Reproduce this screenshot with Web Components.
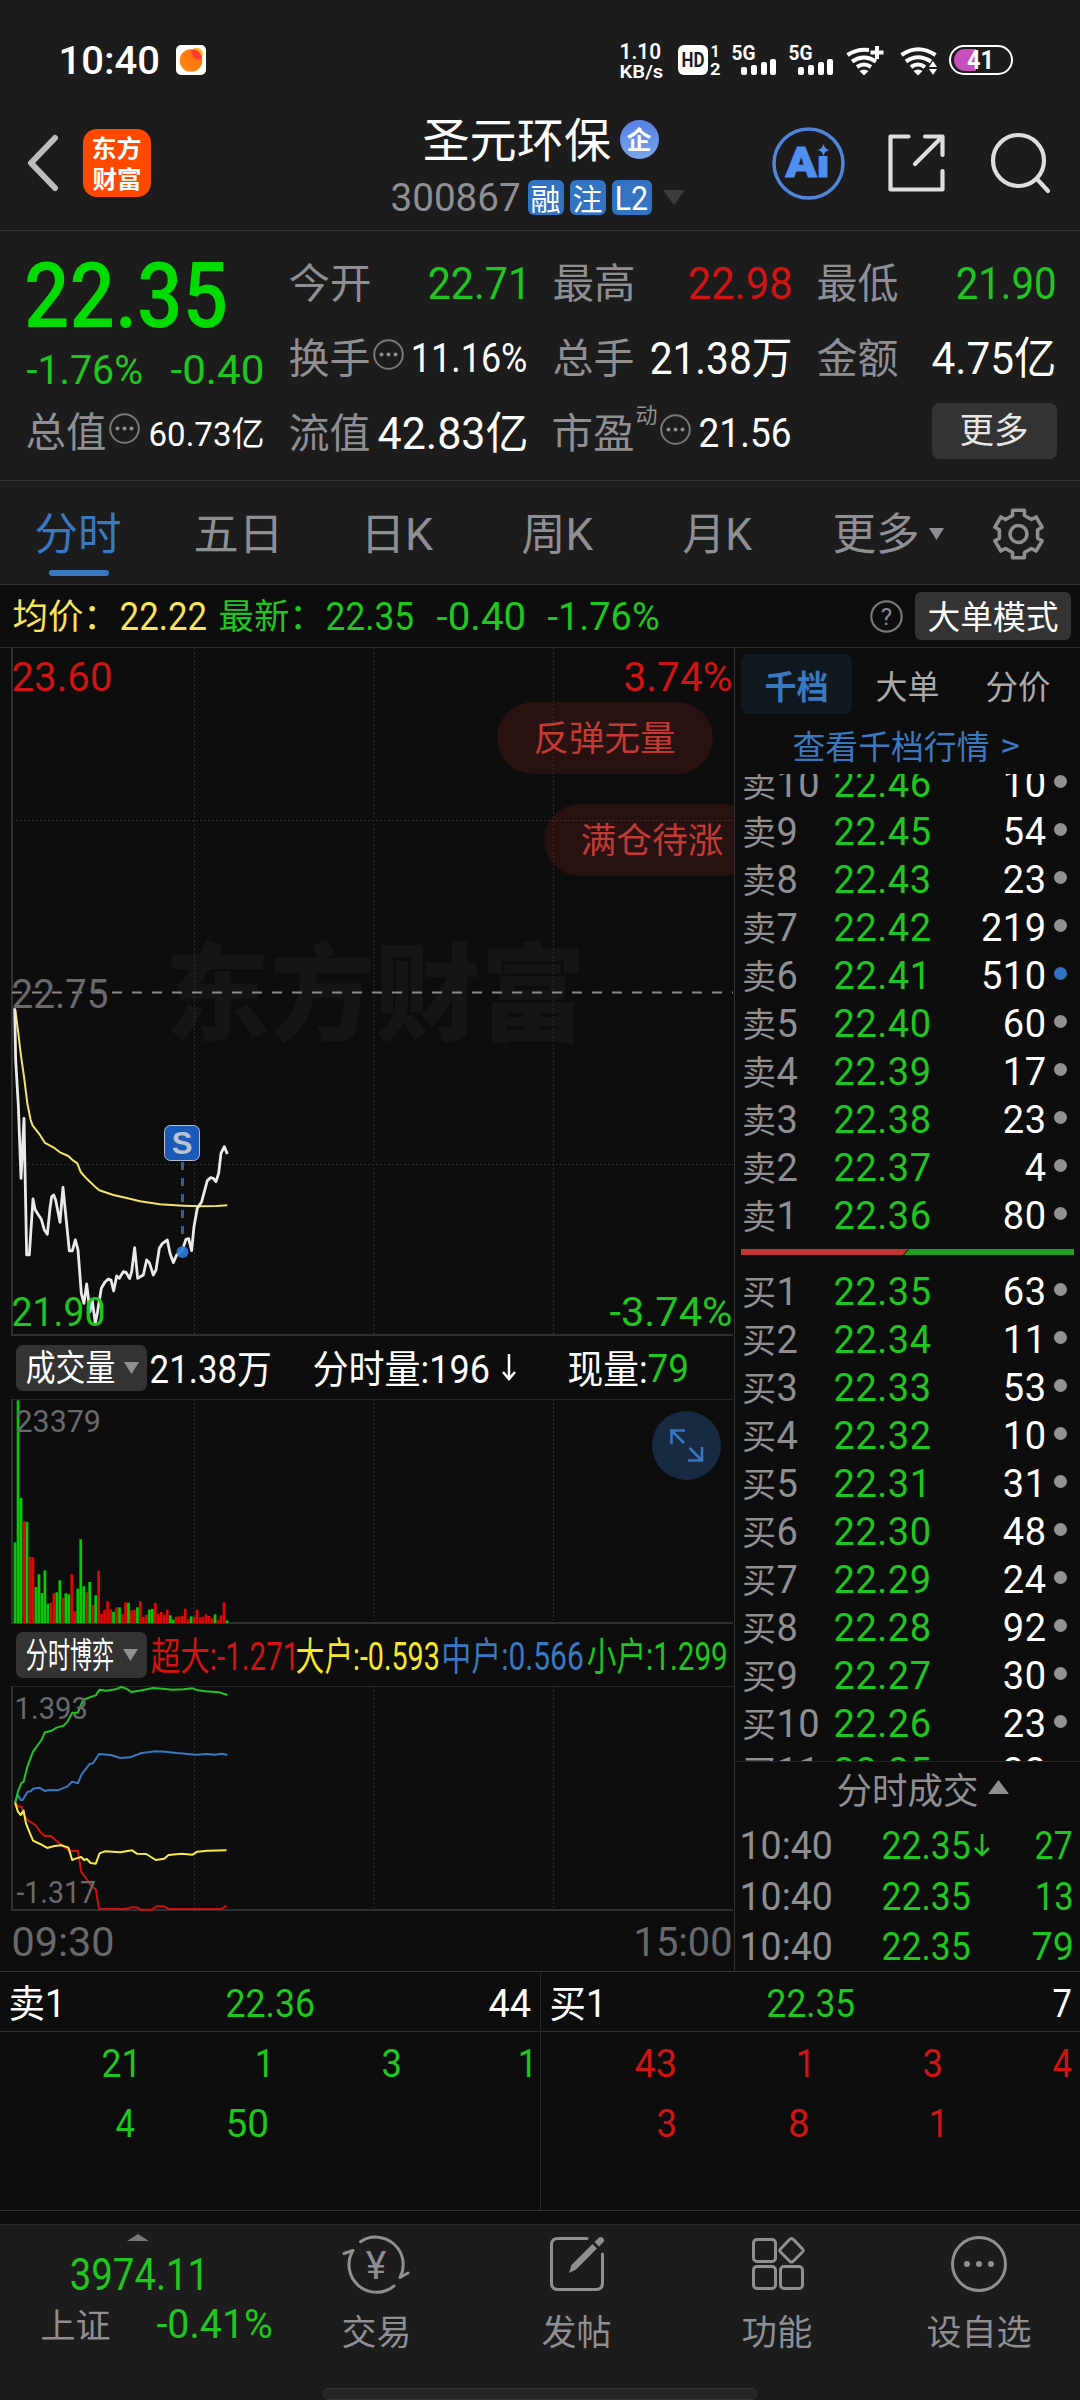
<!DOCTYPE html>
<html lang="zh-CN">
<head>
<meta charset="utf-8">
<title>圣元环保 300867</title>
<style>
    body {
        margin: 0;
        width: 1080px;
        height: 2400px;
        overflow: hidden;
        background: #1c1c1c;
        color: #fff;
        font-family: Roboto, "Noto Sans CJK SC", sans-serif;
        --up: #d01313;
        --down: #1fc61f;
        --grey: #8e8e93;
        --blue: #3a78c0;
        --line: #333;
        --dark: #0d0d0d;
    }
    main {
        display: flex;
        height: 1323px;
        border-top: 1px solid #2c2c2c;
        background: var(--dark);
    }
</style>
</head>
<body>
<status-bar></status-bar>
<stock-header></stock-header>
<quote-panel></quote-panel>
<period-tabs></period-tabs>
<price-strip></price-strip>
<main>
    <chart-column></chart-column>
    <order-book></order-book>
</main>
<deal-queue></deal-queue>
<bottom-nav></bottom-nav>

<script>
// Text squeezed or stretched to a given width, box is one cap-height tall
class FitText extends HTMLElement {
    connectedCallback() {
        if (this.shadowRoot) return;
        const size = Number(this.getAttribute('s')) || 38;
        const width = Number(this.getAttribute('w')) || 0;
        this.attachShadow({ mode: 'open' });
        this.shadowRoot.innerHTML = `
        <style>
            :host {
                display: block;
                flex: none;
                font-size: ${size}px;
                height: .711em;
                line-height: .711em;
                white-space: nowrap;
            }
            span {
                display: inline-block;
                transform-origin: 0 0;
            }
        </style>
        <span><slot></slot></span>`;
        if (!width) return;
        this.style.width = width + 'px';
        const cs = getComputedStyle(this);
        const ctx = FitText.canvas.getContext('2d');
        ctx.font = `${cs.fontWeight} ${size}px ${cs.fontFamily}`;
        const m = ctx.measureText(this.textContent);
        const k = width / (m.actualBoundingBoxRight + m.actualBoundingBoxLeft);
        // han glyphs sit a little high against the latin cap box
        const dy = /[\u4e00-\u9fff]/.test(this.textContent) ? 2 : 1;
        this.shadowRoot.querySelector('span').style.transform =
            `translate(${m.actualBoundingBoxLeft * k - .5}px, ${dy}px) scaleX(${k})`;
    }
}
FitText.canvas = document.createElement('canvas');
customElements.define('fit-text', FitText);

const fit = (text, w, s, cls = '', ml = 0) =>
    `<fit-text w="${w}" s="${s}" class="${cls}"${ml ? ` style="margin-left:${ml}px"` : ''}>${text}</fit-text>`;

const common = `
    * { box-sizing: border-box; }
    svg { display: block; flex: none; overflow: visible; }
    .g { color: var(--down); }
    .r { color: var(--up); }
    .grey { color: var(--grey); }
    .blue { color: var(--blue); }
    .auto { margin-left: auto; }
`;

const define = (name, html) => customElements.define(name, class extends HTMLElement {
    connectedCallback() {
        this.attachShadow({ mode: 'open' });
        this.shadowRoot.innerHTML = html;
    }
});

/* ---------- small parts ---------- */

define('info-dot', `
    <style>:host { display: block; flex: none; margin: -7px 0 0 3px; }</style>
    <svg width="31" height="31" viewBox="0 0 31 31" style="display:block">
        <circle cx="15.5" cy="15.5" r="14.3" fill="none" stroke="#77777b" stroke-width="2"/>
        <g fill="#8e8e93"><circle cx="8.5" cy="15.5" r="2"/><circle cx="15.5" cy="15.5" r="2"/><circle cx="22.5" cy="15.5" r="2"/></g>
    </svg>`);

define('drop-button', `
    <style>
        :host {
            display: flex;
            align-items: center;
            flex: none;
            gap: 9px;
            width: 131px;
            height: 46px;
            margin-left: 16px;
            padding-left: 11px;
            box-sizing: border-box;
            border-radius: 7px;
            background: #333;
        }
    </style>
    <slot></slot>
    <svg width="15" height="12"><path d="M0 0H15L7.5 12Z" fill="#8e8e93"/></svg>`);

/* ---------- status bar ---------- */

define('status-bar', `
    <style>${common}
        :host { display: flex; align-items: center; height: 96px; padding: 24px 66px 0 62px; box-sizing: border-box; }
        .time { font-weight: 500; }
        .speed { display: flex; flex-direction: column; gap: 5px; font-weight: 600; margin-left: auto; margin-right: 14px; }
        text { font-family: Roboto, sans-serif; font-weight: 700; fill: #fff; }
    </style>
    ${fit('10:40', 97, 39.5, 'time')}
    <svg width="30" height="30" viewBox="0 0 30 30" style="margin-left:17px">
        <defs><linearGradient id="o" x1="0" y1="1" x2="1" y2="0"><stop offset="0" stop-color="#ff8a1c"/><stop offset="1" stop-color="#ff6d00"/></linearGradient></defs>
        <rect width="30" height="30" rx="5" fill="#fff"/>
        <circle cx="20.5" cy="9" r="6.3" fill="#ffb21a"/>
        <circle cx="15" cy="15.5" r="11.3" fill="url(#o)"/>
        <path d="M15.5 5.2C19 4 24 6 26 13C21 17 15 12 15.500 5.200Z" fill="#ff3b2f"/>
    </svg>
    <div class="speed">${fit('1.10', 40, 22)}${fit('KB/s', 43, 19)}</div>
    <svg width="336" height="32" viewBox="678 44 336 32">
        <rect x="678" y="45" width="30" height="30" rx="6" fill="#fff"/>
        <text x="681.5" y="67" font-size="20" textLength="23" lengthAdjust="spacingAndGlyphs" style="fill:#1c1c1c">HD</text>
        <text x="710.500" y="57" font-size="16">1</text>
        <text x="710" y="74.500" font-size="17" textLength="10.500" lengthAdjust="spacingAndGlyphs">2</text>
        <g>
            <text x="731.500" y="59.500" font-size="20" textLength="24" lengthAdjust="spacingAndGlyphs">5G</text>
            <g fill="#fff">
                <rect x="741" y="67" width="6" height="8" rx="2"/><rect x="751" y="65" width="6" height="10" rx="2"/>
                <rect x="761" y="62" width="6" height="13" rx="2"/><rect x="770" y="59" width="6" height="16" rx="2"/>
            </g>
        </g>
        <g transform="translate(57 0)">
            <text x="731.500" y="59.500" font-size="20" textLength="24" lengthAdjust="spacingAndGlyphs">5G</text>
            <g fill="#fff">
                <rect x="741" y="67" width="6" height="8" rx="2"/><rect x="751" y="65" width="6" height="10" rx="2"/>
                <rect x="761" y="62" width="6" height="13" rx="2"/><rect x="770" y="59" width="6" height="16" rx="2"/>
            </g>
        </g>
        <g fill="none" stroke="#fff" stroke-width="4">
            <path d="M847.500 55Q857 48.500 869 50M852 61.500Q864 53.500 876 61.500M857 67Q864 62 871 67"/>
            <path d="M877 46V59M870.500 52.500H883.500"/>
            <path d="M901.500 55Q918 43.500 935.500 55M906 61.500Q918 53 931 61.500M911 67Q918 62 925 67"/>
        </g>
        <path d="M859.500 71Q864 68 868.500 71L864 75.500ZM913.500 71Q918 68 922.500 71L918 75.500Z" fill="#fff"/>
        <path d="M933 61L937 67H929ZM933 75L937 69H929Z" fill="#fff"/>
        <path d="M976 49H965A11 11 0 0 0 965 71H976Z" fill="#c74fbd"/>
        <rect x="950" y="46" width="62" height="28" rx="14" fill="none" stroke="#fff" stroke-width="2"/>
        <text x="967" y="69" font-size="25" textLength="27" lengthAdjust="spacingAndGlyphs">41</text>
    </svg>`);

/* ---------- header ---------- */

define('stock-header', `
    <style>${common}
        :host { display: flex; height: 135px; border-bottom: 1px solid var(--line); box-sizing: border-box; }
        .left { display: flex; align-items: center; gap: 25px; width: 392px; padding-left: 27px; box-sizing: border-box; }
        .logo {
            display: flex; flex-direction: column; align-items: center; justify-content: center; gap: 13px;
            width: 68px; height: 68px; border-radius: 14px; background: #ff4800; font-weight: 700;
        }
        .title { width: 293px; padding-top: 22px; }
        .row { display: flex; align-items: center; }
        .name { height: 44px; padding-left: 32px; }
        .qi {
            display: flex; align-items: center; justify-content: center; width: 39px; height: 39px; margin-left: 9px; margin-top: -2px;
            border-radius: 50%; background: linear-gradient(#5580e6, #7aa5ec); font-weight: 700;
        }
        .code { height: 35px; margin-top: 18px; gap: 6px; }
        .tag { display: flex; align-items: center; justify-content: center; width: 36px; height: 35px; border-radius: 6px; background: #3374c2; }
        .actions { display: flex; align-items: center; margin-left: 87px; }
    </style>
    <div class="left">
        <svg width="31" height="56" viewBox="0 0 31 56"><path d="M28 3L4 28L28 53" fill="none" stroke="#bdbdbd" stroke-width="6" stroke-linecap="round" stroke-linejoin="round"/></svg>
        <div class="logo">${fit('东方', 48, 24)}${fit('财富', 48, 24)}</div>
    </div>
    <div class="title">
        <div class="row name">${fit('圣元环保', 187, 46.5)}<div class="qi">${fit('企', 25, 25)}</div></div>
        <div class="row code">${fit('300867', 128, 39.5, 'grey')}
            <div class="tag" style="margin-left:2px">${fit('融', 28, 30)}</div>
            <div class="tag">${fit('注', 28, 30)}</div>
            <div class="tag" style="width:40px">${fit('L2', 31, 33)}</div>
            <svg width="22" height="15" style="margin-left:5px"><path d="M0 0H22L11 15Z" fill="#3c3c3c"/></svg>
        </div>
    </div>
    <div class="actions">
        <svg width="73" height="73" viewBox="0 0 73 73">
            <circle cx="36.500" cy="36.500" r="34.500" fill="none" stroke="#4f86dc" stroke-width="3.500"/>
            <text x="13.500" y="50" font-family="Roboto" font-weight="900" font-size="42" fill="#4f8ff0" stroke="#4f8ff0" textLength="44" lengthAdjust="spacingAndGlyphs">Ai</text>
            <rect x="43" y="15" width="18" height="14" fill="#1c1c1c"/>
            <path d="M51.500 17Q52.500 22 57.500 23Q52.500 24 51.500 29Q50.500 24 45.500 23Q50.500 22 51.500 17Z" fill="#4f8ff0"/>
        </svg>
        <svg width="57" height="58" viewBox="0 0 57 58" style="margin-left:43px" fill="none" stroke="#dedede" stroke-width="4.200" stroke-linecap="round" stroke-linejoin="round">
            <path d="M20.500 2.500H2.500V55.500H54.500V37M37 2.500H54.500V21M54 3L27 30"/>
        </svg>
        <svg width="60" height="62" viewBox="0 0 60 62" style="margin-left:46px" fill="none" stroke="#dedede" stroke-width="4.200" stroke-linecap="round">
            <circle cx="27.500" cy="28.500" r="25.500"/><path d="M46 47L57 59"/>
        </svg>
    </div>`);

/* ---------- quote figures ---------- */

define('quote-panel', `
    <style>${common}
        :host { display: flex; gap: 27px; height: 250px; padding: 14px 25px 0 27px; border-bottom: 1px solid var(--line); box-sizing: border-box; }
        .left { display: grid; grid-template-rows: 100px 49px 76px; width: 236px; }
        .grid { display: grid; grid-template: repeat(3, 75px) / repeat(3, 237px); column-gap: 27px; }
        .left > div, .grid > div { display: flex; align-items: center; }
        .price { color: #00dc00; font-weight: 500; }
        .sup { margin: 0 0 38px 3px; }
        .open { margin-right: 3px; }
        .more {
            display: flex; align-items: center; justify-content: center; width: 125px; height: 56px; margin: -4px -2px 0 auto;
            border-radius: 7px; background: #333; color: #e6e6e6;
        }
    </style>
    <div class="left">
        <div>${fit('22.35', 199, 91.5, 'price')}</div>
        <div>${fit('-1.76%', 115, 40.5, 'g')}${fit('-0.40', 92, 40.5, 'g auto')}</div>
        <div>${fit('总值', 79, 41, 'grey')}<info-dot></info-dot>${fit('60.73亿', 112, 34, 'auto')}</div>
    </div>
    <div class="grid">
        <div>${fit('今开', 80, 41, 'grey')}${fit('22.71', 94, 45, 'g auto open')}</div>
        <div>${fit('最高', 80, 41, 'grey')}${fit('22.98', 101, 45, 'r auto')}</div>
        <div>${fit('最低', 80, 41, 'grey')}${fit('21.90', 97, 45, 'g auto')}</div>
        <div>${fit('换手', 80, 41, 'grey')}<info-dot></info-dot>${fit('11.16%', 113, 41, 'auto')}</div>
        <div>${fit('总手', 80, 41, 'grey')}${fit('21.38万', 139, 44, 'auto')}</div>
        <div>${fit('金额', 80, 41, 'grey')}${fit('4.75亿', 122, 44, 'auto')}</div>
        <div>${fit('流值', 80, 41, 'grey')}${fit('42.83亿', 148, 44, 'auto')}</div>
        <div>${fit('市盈', 80, 41, 'grey')}${fit('动', 20, 22, 'grey sup')}<info-dot></info-dot>${fit('21.56', 91, 41, 'auto')}</div>
        <div><div class="more">${fit('更多', 67, 35)}</div></div>
    </div>`);

/* ---------- period tabs ---------- */

const gearPoints = () => {
    const pts = [];
    for (let i = 0; i < 6; i++) {
        for (const [r, d] of [[19.5, -18], [24.5, -14], [24.5, 14], [19.5, 18]]) {
            const a = (i * 60 + d - 90) * Math.PI / 180;
            pts.push((25.5 + r * Math.cos(a)).toFixed(1) + ',' + (26 + r * Math.sin(a)).toFixed(1));
        }
    }
    return pts.join(' ');
};

define('period-tabs', `
    <style>${common}
        :host {
            display: grid; grid-template-columns: 157px 159px 170px 145px 175px 167px 90px;
            height: 104px; border-bottom: 1px solid var(--line); color: var(--grey); box-sizing: border-box;
        }
        div { display: flex; align-items: center; justify-content: center; gap: 11px; padding-top: 2px; position: relative; }
        .on { color: var(--blue); }
        .on::after { content: ''; position: absolute; left: 49px; bottom: 8px; width: 60px; height: 6px; border-radius: 3px; background: var(--blue); }
    </style>
    <div class="on">${fit('分时', 85, 44)}</div>
    <div>${fit('五日', 81, 44)}</div>
    <div>${fit('日K', 66, 44)}</div>
    <div>${fit('周K', 71, 44)}</div>
    <div>${fit('月K', 69, 44)}</div>
    <div>${fit('更多', 83, 44)}<svg width="15" height="12"><path d="M0 0H15L7.500 12Z" fill="#8e8e93"/></svg></div>
    <div><svg width="51" height="52" viewBox="0 0 51 52" fill="none" stroke="#8e8e93" stroke-width="3.600" stroke-linejoin="round">
        <polygon points="${gearPoints()}"/><circle cx="25.500" cy="26" r="8.500"/></svg></div>`);

define('price-strip', `
    <style>${common}
        :host { display: flex; align-items: center; height: 62px; padding: 0 9px 0 14px; background: var(--dark); box-sizing: border-box; }
        .y { color: #f8e35c; }
        .mode { display: flex; align-items: center; justify-content: center; width: 156px; height: 48px; margin-left: 12px; border-radius: 6px; background: #333; }
    </style>
    ${fit('均价：', 82, 35, 'y')}${fit('22.22', 86, 38.5, 'y', 25)}
    ${fit('最新：', 82, 35, 'g', 13)}${fit('22.35', 87, 38.5, 'g', 25)}
    ${fit('-0.40', 88, 38.5, 'g', 23)}${fit('-1.76%', 111, 38.5, 'g', 23)}
    <svg class="auto" width="33" height="33" viewBox="0 0 33 33">
        <circle cx="16.500" cy="16.500" r="15.200" fill="none" stroke="#77777b" stroke-width="2.200"/>
        <text x="16.500" y="25" font-size="24" text-anchor="middle" fill="#8e8e93">?</text>
    </svg>
    <div class="mode">${fit('大单模式', 129, 33)}</div>`);

/* ---------- charts ---------- */

// bar top measured down a 668-unit axis, g / r is the direction of that minute
const volume = ('636g 210g 503g 572r 575g 679r 681r 770g 732g 788g 720g 820g 817r 789r 786g 750g 802r 789g 792g 732r 843r 775g ' +
    '627g 768g 786r 755g 823r 795g 721r 851r 839r 813r 837r 844g 831r 831g 852r 816r 817g 840r 838r 831g 813r 860r 853r 838g ' +
    '836g 818r 850r 845r 853r 838r 855g 868g 859r 858r 856r 835r 867r 858g 860r 838r 861r 859r 852r 857r 864r 852g 870r 855r ' +
    '816r 870g').split(' ');

const volumeBars = volume.map((v, i) => {
    const h = (878 - parseInt(v)) / 3;
    return `<rect x="${(13.7 + i * 2.985).toFixed(2)}" y="${(1623 - h).toFixed(1)}" width="2.7" height="${h.toFixed(1)}" fill="${v.endsWith('g') ? '#0c0' : '#dc0808'}"/>`;
}).join('');

const plotGrid = (top, bottom) => `
    <g fill="none" stroke="#2c2c2c" stroke-width="1">
        <path d="M194.500 ${top}V${bottom}M374 ${top}V${bottom}M553.500 ${top}V${bottom}" stroke-dasharray="2 2"/>
        <path d="M12 ${top}V${bottom - 1}H733" stroke="#303030" stroke-width="2"/>
    </g>`;

define('chart-column', `
    <style>${common}
        :host { display: flex; flex-direction: column; width: 735px; border-right: 1px solid var(--line); box-sizing: border-box; }
        .plot { position: relative; flex: none; overflow: hidden; }
        .plot fit-text, .pill { position: absolute; }
        .bar { display: flex; flex: none; align-items: center; }
        .dim { color: #69696b; }
        .pill {
            display: flex; align-items: center; width: 216px; height: 72px; padding-left: 38px;
            border-radius: 36px; background: rgba(200, 40, 40, .14); color: #c23a34;
        }
        .pill fit-text { position: static; }
        .axis { display: flex; align-items: center; justify-content: space-between; height: 59px; padding: 3px 3px 0 14px; }
        .line { fill: none; stroke-linejoin: round; }
        .line * { vector-effect: non-scaling-stroke; }
        .mark { font-weight: 900; color: #151515; }
    </style>
    <div class="plot" style="height:688px">
        <fit-text class="mark" w="410" s="106" style="left:170px;top:309px">东方财富</fit-text>
        <svg width="734" height="688" viewBox="0 648 734 688" style="position:relative">
            ${plotGrid(648, 1336)}
            <path d="M12 820.500H733M12 1164.500H733" stroke="#2c2c2c" stroke-dasharray="2 2"/>
            <path d="M12 992.500H733" stroke="#8a8a8a" stroke-width="2" stroke-dasharray="10 10"/>
            <g class="line" transform="translate(0 960) scale(.3333)">
                <polyline stroke="#f5e36a" stroke-width="2" points="46,150 55,220 62,280 72,350 82,430 92,480 98,497 120,525 135,549 160,562 180,577 205,588 220,602 232,610 242,636 262,658 285,680 298,691 340,705 380,714 420,724 480,733 550,737 600,739 650,738 682,736"/>
                <polyline stroke="#eaeaea" stroke-width="2.800" points="44,145 47,300 55,436 63,655 72,475 80,885 88,885 99,717 105,748 114,763 124,778 133,810 142,823 150,745 155,710 161,705 167,720 180,787 189,682 208,873 217,873 226,840 234,870 244,1000 252,1030 260,972 270,1055 277,1022 286,1090 292,1060 304,985 315,966 325,957 333,960 341,993 350,948 358,955 370,935 378,937 389,956 395,935 404,863 413,955 430,945 440,900 448,908 460,945 468,930 478,865 486,852 502,840 510,880 520,908 530,885 547,870 558,838 566,836 575,872 582,800 592,745 605,725 622,662 632,653 640,655 648,665 656,640 663,580 673,560 682,582"/>
            </g>
            <path d="M182.500 1162V1238" stroke="#2860a8" stroke-width="3" stroke-dasharray="8 8"/>
            <circle cx="182.500" cy="1252" r="6" fill="#2f78dc" fill-opacity=".9"/>
            <rect x="164.500" y="1125.500" width="35" height="35" rx="6" fill="#1a5ab8" stroke="#b4bfd0"/>
            <text x="182" y="1154" font-size="31" font-weight="700" font-family="Liberation Sans" text-anchor="middle" fill="#b8c2d0">S</text>
        </svg>
        <fit-text class="r" w="98" s="41" style="left:13px;top:14px">23.60</fit-text>
        <fit-text class="r" w="107" s="41" style="right:2px;top:14px">3.74%</fit-text>
        <fit-text class="dim" w="95" s="41" style="left:13px;top:331px">22.75</fit-text>
        <fit-text class="g" w="91" s="41" style="left:13px;top:649px">21.90</fit-text>
        <fit-text class="g" w="122" s="41" style="right:2px;top:649px">-3.74%</fit-text>
        <div class="pill" style="left:497px;top:54px">${fit('反弹无量', 140, 35)}</div>
        <div class="pill" style="left:544px;top:156px">${fit('满仓待涨', 141, 35)}</div>
    </div>

    <div class="bar" style="height:63px">
        <drop-button>${fit('成交量', 88, 36)}</drop-button>
        ${fit('21.38万', 120, 38.5, '', 4)}${fit('分时量:196', 175, 38.5, '', 43)}
        <svg width="14" height="28" viewBox="0 0 14 28" style="margin-left:13px" fill="none" stroke="#fff" stroke-width="2.500"><path d="M7 0V25M1 18L7 25L13 18"/></svg>
        ${fit('现量:', 77, 38.5, '', 53)}${fit('79', 39, 38.5, 'g', 3)}
    </div>

    <div class="plot" style="height:225px">
        <svg width="734" height="225" viewBox="0 1399 734 225">
            ${plotGrid(1399, 1624)}
            <path d="M12 1399.500H733" stroke="#282828"/>
            ${volumeBars}
            <circle cx="686.500" cy="1445.500" r="34.500" fill="#172a42"/>
            <g fill="none" stroke="#3676c2" stroke-width="2.600"><path d="M671.500 1444V1430.500H685M672 1431L684 1443M702 1447V1460.500H688M701.500 1460L689.500 1448"/></g>
        </svg>
        <fit-text class="dim" w="83" s="31" style="left:17px;top:11px">23379</fit-text>
    </div>

    <div class="bar" style="height:62px">
        <drop-button>${fit('分时博弈', 87, 35)}</drop-button>
        ${fit('超大:-1.271', 142, 38.5, 'r', 5)}
        <fit-text w="142" s="38.5" style="color:#f8e829;margin-left:3px">大户:-0.593</fit-text>
        ${fit('中户:0.566', 139, 38.5, 'blue', 5)}${fit('小户:1.299', 139, 38.5, 'g', 5)}
    </div>

    <div class="plot" style="height:225px">
        <svg width="734" height="225" viewBox="0 1686 734 225">
            ${plotGrid(1686, 1911)}
            <path d="M12 1686.500H733" stroke="#282828"/>
            <g class="line" stroke-width="2" transform="translate(0 1620) scale(.4719 .3333)">
                <polyline stroke="#cc1111" points="32,548 40,560 46,560 50,585 60,602 75,615 85,635 95,648 108,648 118,661 135,680 148,693 165,692 172,755 185,780 195,800 203,808 210,866 265,867 280,862 290,862 298,869 322,869 332,859 347,859 357,867 470,867 480,857"/>
                <polyline stroke="#3a78c0" points="32,548 38,525 44,540 48,540 58,516 66,513 70,506 83,503 95,513 105,510 122,511 143,499 153,485 165,490 173,463 190,432 197,430 210,402 235,405 255,414 275,412 300,399 330,394 350,395 375,399 415,404 440,402 455,404 470,401 482,405"/>
                <polyline stroke="#1fc61f" points="32,548 38,515 45,490 50,485 58,440 70,395 80,375 88,360 95,337 108,333 120,323 135,317 143,305 153,278 165,278 176,240 190,232 203,226 211,209 225,212 245,208 257,201 268,206 278,216 295,212 325,204 350,207 365,209 390,208 408,205 420,211 435,214 465,217 482,225"/>
                <polyline stroke="#f8e84a" points="32,548 38,575 44,585 50,572 55,610 62,635 70,662 85,672 100,684 115,678 130,676 145,683 153,720 160,716 172,711 178,720 184,717 192,729 203,731 211,700 222,694 255,697 280,691 290,701 310,702 330,720 348,716 357,705 385,701 408,704 418,695 440,692 480,691"/>
            </g>
        </svg>
        <fit-text class="dim" w="70" s="31" style="left:17px;top:11px">1.393</fit-text>
        <fit-text class="dim" w="79" s="31" style="left:17px;top:195px">-1.317</fit-text>
    </div>
    <div class="axis dim">${fit('09:30', 99, 41)}${fit('15:00', 94, 41)}</div>`);

/* ---------- order book ---------- */

const asks = [['卖10', '22.46', 10], ['卖9', '22.45', 54], ['卖8', '22.43', 23], ['卖7', '22.42', 219], ['卖6', '22.41', 510],
    ['卖5', '22.40', 60], ['卖4', '22.39', 17], ['卖3', '22.38', 23], ['卖2', '22.37', 4], ['卖1', '22.36', 80]];
const bids = [['买1', '22.35', 63], ['买2', '22.34', 11], ['买3', '22.33', 53], ['买4', '22.32', 10], ['买5', '22.31', 31],
    ['买6', '22.30', 48], ['买7', '22.29', 24], ['买8', '22.28', 92], ['买9', '22.27', 30], ['买10', '22.26', 23], ['买11', '22.25', 33]];

const level = ([label, price, qty]) => `
    <div class="level"><span class="label">${label}</span><span class="p g">${price}</span><span class="q">${qty}</span><i${qty > 500 ? ' class="big"' : ''}></i></div>`;

const deal = (price, qty, w, arrow = '') => `
    <div class="deal">${fit('10:40', 89, 38, 'grey')}${fit(price, 87, 38, 'g', 51)}${arrow}${fit(qty, w, 38, 'g auto')}</div>`;

define('order-book', `
    <style>${common}
        :host { display: flex; flex-direction: column; width: 345px; }
        :host > div { flex: none; }
        .tabs { display: flex; height: 66px; padding: 6px 0 0 6px; color: #aaa; }
        .tabs div { display: flex; align-items: center; justify-content: center; width: 111px; height: 60px; padding-top: 3px; }
        .tabs .on { border-radius: 8px; background: #101820; color: var(--blue); font-weight: 700; }
        .link { display: flex; align-items: center; gap: 14px; height: 60px; padding: 3px 0 0 59px; color: var(--blue); }
        .levels { height: 988px; overflow: hidden; border-bottom: 1px solid #242424; }
        .asks { margin-top: -14px; }
        .level { display: flex; align-items: center; height: 48px; padding-left: 7px; font-size: 38px; line-height: 48px; letter-spacing: .5px; }
        .label { width: 81px; color: var(--grey); white-space: nowrap; }
        .label::first-letter { font-size: 34px; }
        .p { width: 108.500px; text-align: right; }
        .q { width: 115px; text-align: right; }
        i { width: 13px; height: 13px; margin: -6px 0 0 7.500px; border-radius: 50%; background: #919196; }
        i.big { background: #3374c2; }
        .ratio { display: block; margin: 9px 0 13px 6px; }
        .head { display: flex; align-items: center; gap: 10px; height: 58px; padding-left: 103px; }
        .deal { display: flex; align-items: center; height: 51px; padding: 0 8px 0 7.500px; }
        .deal:last-child { height: 50px; }
    </style>
    <div class="tabs"><div class="on">${fit('千档', 62, 33)}</div><div>${fit('大单', 62, 33)}</div><div>${fit('分价', 63, 33)}</div></div>
    <div class="link">${fit('查看千档行情', 195, 33)}<fit-text w="16" s="31">&gt;</fit-text></div>
    <div class="levels">
        <div class="asks">${asks.map(level).join('')}</div>
        <svg class="ratio" width="333" height="6"><path d="M0 0H167L162 6H0Z" fill="#c23434"/><path d="M168 0H333V6H163Z" fill="#1ea01e"/></svg>
        ${bids.map(level).join('')}
    </div>
    <div class="head">${fit('分时成交', 140, 36, 'grey')}<svg width="21" height="14" style="margin-top:-8px"><path d="M0 14L10.500 0L21 14Z" fill="#8e8e93"/></svg></div>
    ${deal('22.35', '27', 36, '<svg width="16" height="24" viewBox="0 0 16 24" style="margin-left:4px" fill="none" stroke="#1fc61f" stroke-width="2.600"><path d="M8 0V21M1 14L8 21L15 14"/></svg>')}
    ${deal('22.35', '13', 34)}
    ${deal('22.35', '79', 39)}`);

/* ---------- first-level queue ---------- */

const cellWidth = n => [...String(n)].reduce((w, d) => w + (d === '1' ? 11 : 19), 0) + (n > 9 ? 2 : -1);

const queue = (label, price, total, totalW, cls, rows) => `
    <section>
        <header>${fit(label, 48, 38)}${fit(price, 87, 38.5, 'g')}${fit(total, totalW, 38.5)}</header>
        <div class="cells ${cls}">${rows.map(n => fit(n, cellWidth(n), 38.5)).join('')}</div>
    </section>`;

define('deal-queue', `
    <style>${common}
        :host { display: flex; height: 240px; border: solid #333; border-width: 1px 0; background: var(--dark); box-sizing: border-box; }
        section { flex: 1; }
        section + section { border-left: 1px solid #262626; }
        header {
            display: grid; grid-template-columns: 1fr auto 1fr; align-items: center;
            height: 60px; padding: 3px 9px 0 11px; border-bottom: 1px solid #2e2e2e;
        }
        header fit-text:last-child { justify-self: end; }
        .cells {
            display: grid; grid-template-columns: 135px 133px 133px 130px; grid-auto-rows: 60px;
            align-items: center; justify-items: end; padding-top: 1px;
        }
    </style>
    ${queue('卖1', '22.36', '44', 41, 'g', [21, 1, 3, 1, 4, 50])}
    ${queue('买1', '22.35', '7', 17, 'r', [43, 1, 3, 4, 3, 8, 1])}`);

/* ---------- bottom navigation ---------- */

define('bottom-nav', `
    <style>${common}
        :host { display: block; margin-top: 13px; height: 176px; border-top: 1px solid #2b2b2b; background: #1c1c1c; box-sizing: border-box; }
        .strip { height: 13px; background: var(--dark); margin-top: -14px; margin-bottom: 1px; }
        nav { display: grid; grid-template-columns: 275px 201px 201px 201px 202px; height: 163px; }
        .item { display: flex; flex-direction: column; align-items: center; padding-top: 9px; color: var(--grey); }
        .item svg { margin-bottom: 26px; }
        .index svg { margin: 9px 0 18px 127px; }
        .index > fit-text { margin-left: 72px; }
        .sub { display: flex; align-items: center; gap: 47px; margin: 20px 0 0 42px; }
        .home { width: 434px; height: 12px; margin: 0 auto; border: 1px solid #363636; border-radius: 6px; background: #252525; }
    </style>
    <div class="strip"></div>
    <nav>
        <div class="index">
            <svg width="22" height="7"><path d="M0 7L11 0L22 7Z" fill="#77777b"/></svg>
            ${fit('3974.11', 130, 44, 'g')}
            <div class="sub">${fit('上证', 68, 34, 'grey')}${fit('-0.41%', 115, 40, 'g')}</div>
        </div>
        <div class="item">
            <svg width="66" height="60" viewBox="0 0 66 60" fill="none" stroke="#8e8e93" stroke-width="3" stroke-linecap="round" stroke-linejoin="round">
                <path d="M17.500 7.700A27.500 27.500 0 0 1 57 43.500L65 39M51 52A27.500 27.500 0 0 1 10 16.500L1 19.500"/>
                <text x="33" y="45" font-family="Roboto" font-size="39" text-anchor="middle" fill="#8e8e93" stroke="none">¥</text>
            </svg>${fit('交易', 66, 35)}</div>
        <div class="item">
            <svg width="56" height="60" viewBox="0 0 56 60" fill="none" stroke="#8e8e93" stroke-width="3" stroke-linecap="round">
                <path d="M38 4.500H9Q2.500 4.500 2.500 11V49Q2.500 55.500 9 55.500H47Q53.500 55.500 53.500 49V20"/>
                <path d="M20 39L22.500 31L43.500 10L48 14.500L27 35.500ZM45.500 8L49.500 4A3 3 0 0 1 54 8.500L50 12.500Z" fill="#8e8e93" stroke="none"/>
            </svg>${fit('发帖', 68, 35)}</div>
        <div class="item">
            <svg width="52" height="60" viewBox="0 0 52 60" fill="none" stroke="#8e8e93" stroke-width="3" stroke-linejoin="round">
                <rect x="1.500" y="5.500" width="22" height="22" rx="3.500"/><rect x="1.500" y="32.500" width="22" height="22" rx="3.500"/><rect x="28.500" y="32.500" width="22" height="22" rx="3.500"/>
                <path d="M37.500 5.500Q39.500 3.500 41.500 5.500L50.500 15Q52 16.500 50.500 18L41.500 27Q39.500 29 37.500 27L28.500 18Q27 16.500 28.500 15Z"/>
            </svg>${fit('功能', 69, 35)}</div>
        <div class="item">
            <svg width="56" height="60" viewBox="0 0 56 60">
                <circle cx="28" cy="30" r="26.500" fill="none" stroke="#8e8e93" stroke-width="3"/>
                <g fill="#8e8e93"><circle cx="16" cy="30" r="3"/><circle cx="28" cy="30" r="3"/><circle cx="40" cy="30" r="3"/></g>
            </svg>${fit('设自选', 103, 35)}</div>
    </nav>
    <div class="home"></div>`);
</script>
</body>
</html>
